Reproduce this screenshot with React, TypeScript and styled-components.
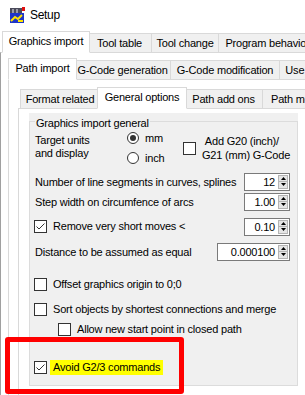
import React from "react";
import styled, { createGlobalStyle } from "styled-components";

const GlobalStyle = createGlobalStyle`
  html, body { margin: 0; padding: 0; background: #fff; }
  body { font-family: "Liberation Sans", Arial, sans-serif; }
`;

interface TabDef {
  label: string;
  from: number;
  to: number;
}

const level1Tabs: TabDef[] = [
  { label: "Graphics import", from: 4, to: 87 },
  { label: "Tool table", from: 87, to: 151 },
  { label: "Tool change", from: 151, to: 218 },
  { label: "Program behavior", from: 218, to: 316 },
];

const level2Tabs: TabDef[] = [
  { label: "Path import", from: 10, to: 74 },
  { label: "G-Code generation", from: 74, to: 170 },
  { label: "G-Code modification", from: 170, to: 279 },
  { label: "Use case", from: 279, to: 335 },
];

const level3Tabs: TabDef[] = [
  { label: "Format related", from: 20, to: 99 },
  { label: "General options", from: 99, to: 184 },
  { label: "Path add ons", from: 184, to: 262 },
  { label: "Path modification", from: 262, to: 360 },
];

const Window = styled.div`
  position: relative;
  width: 305px;
  height: 395px;
  overflow: hidden;
  background: #fff;
  color: #000;
  font-size: 11px;
  letter-spacing: -0.2px;
  display: flex;
  flex-direction: column;
`;

const TitleBar = styled.div`
  flex: none;
  display: flex;
  align-items: center;
  gap: 5px;
  height: 30px;
  padding-left: 9px;
  font-size: 12px;
  letter-spacing: -0.3px;
`;

const Control = styled.div<{ $mt: number; $ml: number }>`
  flex: 1;
  display: flex;
  flex-direction: column;
  margin: ${(p) => p.$mt}px 0 0 ${(p) => p.$ml}px;
  min-width: 0;
`;

const Strip = styled.div<{ $pad: number }>`
  position: relative;
  z-index: 1;
  flex: none;
  display: flex;
  align-items: flex-end;
  height: 22px;
  margin-bottom: -1px;
  padding-left: ${(p) => p.$pad}px;
  white-space: nowrap;
`;

const Tab = styled.div<{ $active: boolean; $w: number }>`
  position: relative;
  z-index: ${(p) => (p.$active ? 2 : 1)};
  flex: none;
  box-sizing: border-box;
  width: ${(p) => p.$w + (p.$active ? 4 : 0)}px;
  height: ${(p) => (p.$active ? 22 : 20)}px;
  margin-left: ${(p) => (p.$active ? -3 : -1)}px;
  margin-right: ${(p) => (p.$active ? -2 : 0)}px;
  padding-bottom: ${(p) => (p.$active ? 2 : 0)}px;
  display: flex;
  align-items: center;
  justify-content: center;
  overflow: hidden;
  border: 1px solid #d9d9d9;
  border-bottom-color: ${(p) => (p.$active ? "#fff" : "#d9d9d9")};
  background: ${(p) => (p.$active ? "#fff" : "#f0f0f0")};
`;

const Page = styled.div<{ $edge: string }>`
  flex: 1;
  display: flex;
  flex-direction: column;
  align-items: flex-start;
  border-top: 1px solid #d9d9d9;
  border-left: 1px solid ${(p) => p.$edge};
  background: #fff;
`;

const GroupBox = styled.div`
  margin: 4px 0 0 10px;
  width: 269px;
  height: 273px;
  background: #f0f0f0;
  display: flex;
`;

const Frame = styled.fieldset`
  flex: 1;
  margin: 0;
  padding: 0;
  min-width: 0;
  border: 1px solid #dcdcdc;
  display: flex;
  flex-direction: column;
`;

const Legend = styled.legend`
  margin-left: 5px;
  padding: 2px 1px 0;
  height: 14px;
  line-height: 16px;
`;

const Row = styled.div<{ $mt: number; $h: number; $indent?: number }>`
  display: flex;
  align-items: center;
  justify-content: space-between;
  margin-top: ${(p) => p.$mt}px;
  height: ${(p) => p.$h}px;
  padding: 0 7px 0 ${(p) => p.$indent ?? 5}px;
  white-space: nowrap;
`;

const UnitsRow = styled.div`
  display: flex;
  align-items: flex-start;
  margin-top: 2px;
  height: 35px;
  padding-left: 5px;
`;

const TwoLine = styled.div<{ $w?: number; $mt: number; $lh: number }>`
  width: ${(p) => (p.$w ? `${p.$w}px` : "auto")};
  margin-top: ${(p) => p.$mt}px;
  line-height: ${(p) => p.$lh}px;
  white-space: nowrap;
`;

const RadioGroup = styled.div`
  display: flex;
  flex-direction: column;
  gap: 6px;
  width: 56px;
`;

const RadioItem = styled.label`
  display: flex;
  align-items: center;
  gap: 6px;
  height: 14px;
`;

const RadioCircle = styled.span<{ $checked: boolean }>`
  box-sizing: border-box;
  width: 12px;
  height: 12px;
  border: 1px solid #333;
  border-radius: 50%;
  background: #fff;
  display: flex;
  align-items: center;
  justify-content: center;
  &::after {
    content: "";
    width: 6px;
    height: 6px;
    border-radius: 50%;
    background: ${(p) => (p.$checked ? "#333" : "transparent")};
  }
`;

const CheckItem = styled.label<{ $mt?: number }>`
  display: flex;
  align-items: center;
  gap: 6px;
  margin-top: ${(p) => p.$mt ?? 0}px;
`;

const Box = styled.span`
  flex: none;
  box-sizing: border-box;
  width: 13px;
  height: 13px;
  border: 1px solid #333;
  background: #fff;
  display: flex;
`;

const Text = styled.span<{ $mark?: boolean }>`
  line-height: 15px;
  padding: 0 ${(p) => (p.$mark ? 3 : 0)}px;
  margin-left: ${(p) => (p.$mark ? -3 : 0)}px;
  background: ${(p) => (p.$mark ? "#ffff00" : "transparent")};
`;

const Spin = styled.div<{ $w: number }>`
  flex: none;
  box-sizing: border-box;
  width: ${(p) => p.$w}px;
  height: 18px;
  padding: 1px;
  display: flex;
  border: 1px solid #7a7a7a;
  background: #fff;
`;

const SpinValue = styled.span`
  flex: 1;
  text-align: right;
  padding-right: 3px;
  line-height: 14px;
`;

const SpinButtons = styled.div`
  width: 10px;
  display: flex;
  flex-direction: column;
`;

const SpinButton = styled.div`
  flex: 1;
  display: flex;
  align-items: center;
  justify-content: center;
  background: #e5e5e5;
  border: 1px solid #b4b4b4;
  & + & {
    border-top: none;
  }
`;

const Annotation = styled.div`
  position: absolute;
  left: 5px;
  top: 337px;
  width: 179px;
  height: 57px;
  box-sizing: border-box;
  border: 5px solid #ff0000;
  border-radius: 3px;
  pointer-events: none;
`;

function AppIcon() {
  return (
    <svg width="16" height="16" viewBox="0 0 16 16">
      <rect x="1" y="1" width="12" height="6" fill="#4a4a5a" />
      <rect x="3" y="2" width="2" height="4" fill="#9a9aa8" />
      <rect x="7" y="2" width="2" height="4" fill="#9a9aa8" />
      <rect x="13" y="0" width="3" height="4" fill="#e01010" />
      <rect x="1" y="6" width="14" height="10" fill="#1f35c8" />
      <path d="M2 14 L6 10 L9 12 L13 8" stroke="#ffe400" strokeWidth="2" fill="none" />
      <rect x="9" y="13" width="5" height="2" fill="#ffe400" />
    </svg>
  );
}

function Check({ checked, label, mark }: { checked: boolean; label: string; mark?: boolean }) {
  return (
    <CheckItem>
      <Box>
        {checked && (
          <svg width="11" height="11" viewBox="0 0 11 11">
            <polyline points="1.5,5.5 4,8 9.5,2.5" stroke="#333" strokeWidth="1" fill="none" />
          </svg>
        )}
      </Box>
      <Text $mark={mark}>{label}</Text>
    </CheckItem>
  );
}

function Radio({ checked, label }: { checked: boolean; label: string }) {
  return (
    <RadioItem>
      <RadioCircle $checked={checked} />
      <span>{label}</span>
    </RadioItem>
  );
}

function NumericUpDown({ value, width }: { value: string; width: number }) {
  return (
    <Spin $w={width}>
      <SpinValue>{value}</SpinValue>
      <SpinButtons>
        <SpinButton>
          <svg width="5" height="3" viewBox="0 0 5 3">
            <polygon points="0,3 5,3 2.5,0" fill="#000" />
          </svg>
        </SpinButton>
        <SpinButton>
          <svg width="5" height="3" viewBox="0 0 5 3">
            <polygon points="0,0 5,0 2.5,3" fill="#000" />
          </svg>
        </SpinButton>
      </SpinButtons>
    </Spin>
  );
}

function TabControl({
  x,
  mt,
  ml,
  tabs,
  active,
  edge = "#d9d9d9",
  children,
}: {
  x: number;
  mt: number;
  ml: number;
  tabs: TabDef[];
  active: number;
  edge?: string;
  children?: React.ReactNode;
}) {
  return (
    <Control $mt={mt} $ml={ml}>
      <Strip $pad={tabs[0].from - x + 1}>
        {tabs.map((t, i) => (
          <Tab key={t.label} $active={i === active} $w={t.to - t.from + 1}>
            {t.label}
          </Tab>
        ))}
      </Strip>
      <Page $edge={edge}>{children}</Page>
    </Control>
  );
}

export default function App() {
  return (
    <>
      <GlobalStyle />
      <Window>
        <TitleBar>
          <AppIcon />
          <span>Setup</span>
        </TitleBar>
        <TabControl x={0} mt={1} ml={0} tabs={level1Tabs} active={0} edge="#a0a0a0">
          <TabControl x={8} mt={5} ml={7} tabs={level2Tabs} active={0}>
            <TabControl x={18} mt={7} ml={9} tabs={level3Tabs} active={1}>
              <GroupBox>
                <Frame>
                  <Legend>Graphics import general</Legend>
                  <UnitsRow>
                    <TwoLine $w={92} $mt={3} $lh={13}>
                      Target units
                      <br />
                      and display
                    </TwoLine>
                    <RadioGroup>
                      <Radio checked label="mm" />
                      <Radio checked={false} label="inch" />
                    </RadioGroup>
                    <CheckItem $mt={3}>
                      <Box />
                      <TwoLine $mt={0} $lh={14}>
                        &nbsp;Add G20 (inch)/
                        <br />
                        G21 (mm) G-Code
                      </TwoLine>
                    </CheckItem>
                  </UnitsRow>
                  <Row $mt={6} $h={19}>
                    <span>Number of line segments in curves, splines</span>
                    <NumericUpDown value="12" width={46} />
                  </Row>
                  <Row $mt={1} $h={19}>
                    <span>Step width on circumfence of arcs</span>
                    <NumericUpDown value="1.00" width={46} />
                  </Row>
                  <Row $mt={5} $h={21} $indent={4}>
                    <Check checked label="Remove very short moves <" />
                    <NumericUpDown value="0.10" width={46} />
                  </Row>
                  <Row $mt={5} $h={19}>
                    <span>Distance to be assumed as equal</span>
                    <NumericUpDown value="0.000100" width={73} />
                  </Row>
                  <Row $mt={14} $h={19} $indent={4}>
                    <Check checked={false} label="Offset graphics origin to 0;0" />
                  </Row>
                  <Row $mt={6} $h={18} $indent={4}>
                    <Check checked={false} label="Sort objects by shortest connections and merge" />
                  </Row>
                  <Row $mt={2} $h={18} $indent={28}>
                    <Check checked={false} label="Allow new start point in closed path" />
                  </Row>
                  <Row $mt={20} $h={19} $indent={4}>
                    <Check checked mark label="Avoid G2/3 commands" />
                  </Row>
                </Frame>
              </GroupBox>
            </TabControl>
          </TabControl>
        </TabControl>
        <Annotation />
      </Window>
    </>
  );
}
